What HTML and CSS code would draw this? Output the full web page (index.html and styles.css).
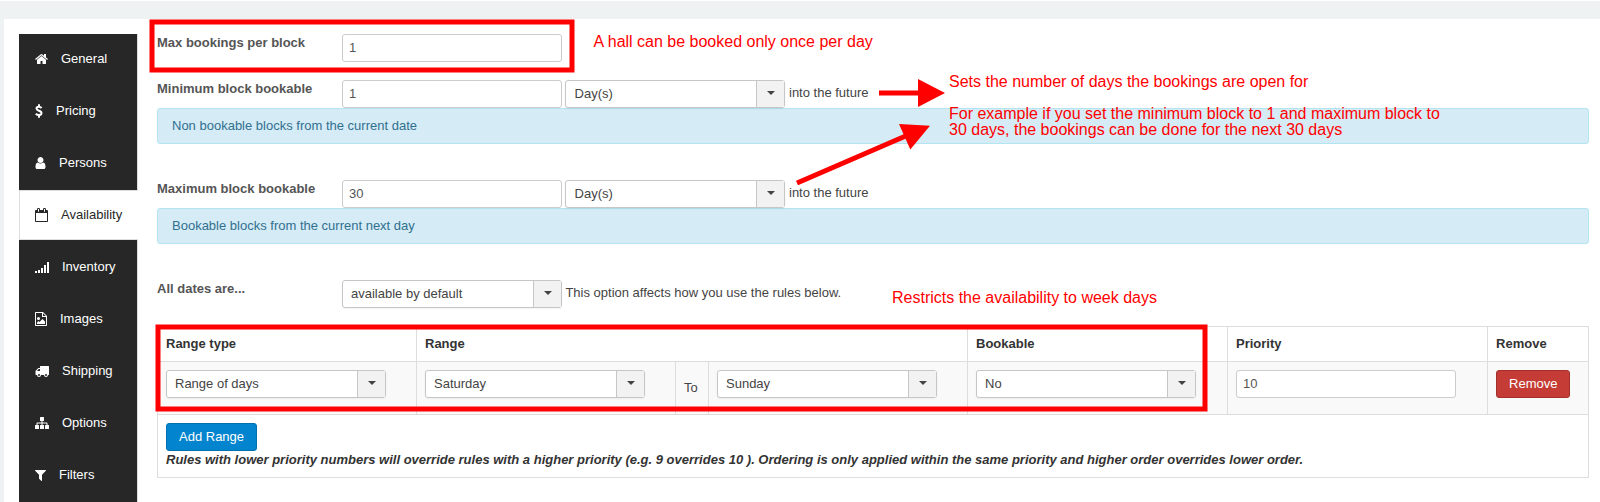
FILE: index.html
```html
<!DOCTYPE html>
<html lang="en">
<head>
<meta charset="utf-8">
<title>Availability</title>
<link rel="stylesheet" href="styles.css">
</head>
<body>
<div class="panel">
  <nav class="tabs">
    <a class="tab"><svg width="13" height="14" viewBox="64 0 1664 1792"><path d="M1472 992v480q0 26-19 45t-45 19h-384v-384h-256v384h-384q-26 0-45-19t-19-45v-480q0-1 .5-3t.5-3l575-474 575 474q1 2 1 6zm223-69l-62 74q-8 9-21 11h-3q-13 0-21-7l-692-577-692 577q-12 8-24 7-13-2-21-11l-62-74q-8-10-7-23.5t11-21.5l719-599q32-26 76-26t76 26l244 204v-195q0-14 9-23t23-9h192q14 0 23 9t9 23v408l219 182q10 8 11 21.5t-7 23.5z"/></svg>General</a>
    <a class="tab"><svg width="8" height="14" viewBox="0 0 8 14"><path class="line" d="M6.600 4C5.800 3.100 4.900 2.800 3.900 2.800 2.500 2.800 1.500 3.500 1.500 4.600 1.500 7.300 6.500 6.100 6.500 9 6.500 10.200 5.400 11.100 3.900 11.100 2.700 11.100 1.700 10.700.8 9.800M4 .2v2.500M4 11.100v2.600"/></svg>Pricing</a>
    <a class="tab"><svg width="11" height="14" viewBox="192 0 1408 1792"><path d="M1536 1399q0 109-62.500 187t-150.500 78h-854q-88 0-150.500-78t-62.500-187q0-85 8.500-160.500t31.500-152 58.500-131 94-89 134.500-34.500q131 128 313 128t313-128q76 0 134.500 34.500t94 89 58.500 131 31.500 152 8.500 160.500zm-256-887q0 159-112.500 271.500t-271.500 112.500-271.500-112.500-112.500-271.500 112.500-271.500 271.500-112.500 271.500 112.500 112.500 271.500z"/></svg>Persons</a>
    <a class="tab active"><svg width="13" height="14" viewBox="64 0 1664 1792"><path d="M192 1664h1408v-1024h-1408v1024zm384-1216v-288q0-14-9-23t-23-9h-64q-14 0-23 9t-9 23v288q0 14 9 23t23 9h64q14 0 23-9t9-23zm768 0v-288q0-14-9-23t-23-9h-64q-14 0-23 9t-9 23v288q0 14 9 23t23 9h64q14 0 23-9t9-23zm384-64v1280q0 52-38 90t-90 38h-1408q-52 0-90-38t-38-90v-1280q0-52 38-90t90-38h128v-96q0-66 47-113t113-47h64q66 0 113 47t47 113v96h384v-96q0-66 47-113t113-47h64q66 0 113 47t47 113v96h128q52 0 90 38t38 90z"/></svg>Availability</a>
    <a class="tab"><svg width="14" height="14" viewBox="0 0 14 14"><path d="M0 11h2v2H0zM3 10h2v3H3zM6 8h2v5H6zM9 5h2v8H9zM12 2h2v11h-2z"/></svg>Inventory</a>
    <a class="tab"><svg width="12" height="14" viewBox="0 0 12 14"><path fill-rule="evenodd" d="M.8 0H8l4 4v9.200a.8.8 0 0 1-.8.800H.8a.8.800 0 0 1-.8-.8V.8A.8.8 0 0 1 .8 0zM1 1v12h10V5H7V1zM8 1.200V4h2.800zM3.500 5a1.500 1.500 0 1 1 0 3 1.500 1.500 0 0 1 0-3zM2 12v-1.500L3.500 9l1 1L7.500 7 10 9.500V12z"/></svg>Images</a>
    <a class="tab"><svg width="14" height="14" viewBox="0 0 14 14"><path fill-rule="evenodd" d="M5.500 2H13.500a.5.500 0 0 1 .5.500V10.500a.6.600 0 0 1-.6.500H13a2 2 0 0 1-4 0H6a2 2 0 0 1-4 0H1a.6.600 0 0 1-.5-.5V7L2.800 4.400A1.200 1.200 0 0 1 3.600 4H5V2.500a.5.500 0 0 1 .5-.5zM5 5H3.700L2 6.900V7H5zM4 10a1 1 0 1 0 0 2 1 1 0 0 0 0-2zM11 10a1 1 0 1 0 0 2 1 1 0 0 0 0-2z"/></svg>Shipping</a>
    <a class="tab"><svg width="14" height="14" viewBox="0 0 14 14"><path d="M5.600 1h2.800a.6.600 0 0 1 .6.600V4.400a.6.600 0 0 1-.6.600H7.500V6.500H11.500a1 1 0 0 1 1 1V9h.9a.6.600 0 0 1 .6.600v2.800a.6.600 0 0 1-.6.600h-2.800a.6.600 0 0 1-.6-.6V9.600a.6.600 0 0 1 .6-.6h.9V7.500h-4V9h.9a.6.600 0 0 1 .6.600v2.800a.6.600 0 0 1-.6.600H5.600a.6.600 0 0 1-.6-.6V9.600a.6.600 0 0 1 .6-.6h.9V7.500h-4V9h.9a.6.600 0 0 1 .6.600v2.800a.6.600 0 0 1-.6.600H.6a.6.600 0 0 1-.6-.6V9.600A.6.600 0 0 1 .6 9h.9V7.500a1 1 0 0 1 1-1h4V5h-.9a.6.600 0 0 1-.6-.6V1.600a.6.600 0 0 1 .6-.6z"/></svg>Options</a>
    <a class="tab"><svg width="11" height="14" viewBox="192 0 1408 1792"><path d="M1595 295q17 41-14 70l-493 493v742q0 42-39 59-13 5-25 5-27 0-45-19l-256-256q-19-19-19-45v-486l-493-493q-31-29-14-70 17-39 59-39h1280q42 0 59 39z"/></svg>Filters</a>
  </nav>

  <main class="content">
    <div class="field first">
      <label>Max bookings per block</label>
      <input class="input" type="text" value="1">
    </div>
    <div class="field">
      <label>Minimum block bookable</label>
      <input class="input" type="text" value="1">
      <div class="select"><span>Day(s)</span><i></i></div>
      <span class="hint">into the future</span>
    </div>
    <div class="alert">Non bookable blocks from the current date</div>
    <div class="field">
      <label>Maximum block bookable</label>
      <input class="input" type="text" value="30">
      <div class="select"><span>Day(s)</span><i></i></div>
      <span class="hint">into the future</span>
    </div>
    <div class="alert">Bookable blocks from the current next day</div>
    <div class="field last">
      <label>All dates are...</label>
      <div class="select"><span>available by default</span><i></i></div>
      <span class="hint">This option affects how you use the rules below.</span>
    </div>

    <table class="rules">
      <colgroup><col class="wide"><col class="wide"><col class="to"><col class="wide"><col class="wider"><col class="wider"><col></colgroup>
      <thead>
        <tr><th>Range type</th><th colspan="3">Range</th><th>Bookable</th><th>Priority</th><th>Remove</th></tr>
      </thead>
      <tbody>
        <tr>
          <td><div class="select"><span>Range of days</span><i></i></div></td>
          <td><div class="select"><span>Saturday</span><i></i></div></td>
          <td class="middle">To</td>
          <td><div class="select"><span>Sunday</span><i></i></div></td>
          <td><div class="select"><span>No</span><i></i></div></td>
          <td><input class="input" type="text" value="10"></td>
          <td><button class="btn danger">Remove</button></td>
        </tr>
      </tbody>
      <tfoot>
        <tr><td colspan="7"><button class="btn primary">Add Range</button><p class="note">Rules with lower priority numbers will override rules with a higher priority (e.g. 9 overrides 10 ). Ordering is only applied within the same priority and higher order overrides lower order.</p></td></tr>
      </tfoot>
    </table>
  </main>
</div>

<div class="annotations">
  <svg width="1600" height="502" viewBox="0 0 1600 502">
    <rect x="152" y="22" width="420" height="48"/>
    <rect x="158" y="327" width="1047" height="82"/>
    <path d="M879 93H920M797 183L908 135"/>
    <path class="head" d="M918 79L945 93L918 107zM899 124L930 125.700L910.300 149.500z"/>
  </svg>
  <p class="remark once">A hall can be booked only once per day</p>
  <p class="remark days">Sets the number of days the bookings are open for</p>
  <p class="remark example">For example if you set the minimum block to 1 and maximum block to<br>30 days, the bookings can be done for the next 30 days</p>
  <p class="remark week">Restricts the availability to week days</p>
</div>
</body>
</html>
```
FILE: styles.css
```css
* { box-sizing: border-box; }

body {
  margin: 0;
  height: 502px;
  overflow: hidden;
  padding: 18px 0 0 4px;
  border-top: 1px solid #fff;
  background: #eef2f3;
  color: #444;
  font: 13px/18px "Liberation Sans", Arial, sans-serif;
}

.panel {
  display: flex;
  height: 483px;
  padding: 15px 11px 0 15px;
  background: #fff;
}

.tabs {
  display: flex;
  flex-direction: column;
  flex: none;
  gap: 2px;
  width: 119px;
  background: linear-gradient(to right, #272727 118px, #ddd 118px);
}

.tab {
  display: flex;
  align-items: center;
  gap: 13px;
  height: 50px;
  padding-left: 16px;
  color: #fff;
}

.tab svg { flex: none; fill: currentColor; }
.tab .line { fill: none; stroke: currentColor; stroke-width: 2; }

.tab.active {
  padding-left: 15px;
  border: 1px solid #ddd;
  border-right: 0;
  background: #fff;
  color: #272727;
}

.content { flex: 1; margin-left: 19px; }

.field { display: flex; height: 28px; }
.field.first { margin-bottom: 18px; }
.field.last { margin-bottom: 18px; }

.field label {
  width: 185px;
  color: #555;
  font-weight: bold;
}

.input {
  width: 220px;
  height: 28px;
  padding: 0 6px 2px;
  border: 1px solid #ccc;
  border-radius: 3px;
  background: #fff;
  color: #555;
  font: inherit;
  display: block;
}

.select {
  display: flex;
  width: 220px;
  height: 28px;
  border: 1px solid #c6c6c6;
  border-radius: 3px;
  background: #fff;
  box-shadow: 0 1px 2px rgba(0, 0, 0, .05);
  line-height: 26px;
}

.select span { flex: 1; padding-left: 8px; }

.select i {
  display: flex;
  justify-content: center;
  width: 28px;
  border-left: 1px solid #c6c6c6;
  background: #f2f2f2;
}

.select i::after {
  content: "";
  align-self: flex-start;
  margin-top: 10px;
  border: 4px solid transparent;
  border-top-color: #444;
  border-bottom: 0;
}

.input + .select { margin-left: 3px; }
.input + .select span { padding-left: 8.600px; }
.hint { margin-left: 4px; line-height: 25px; }
.last .hint { margin-left: 3.400px; }

.alert {
  height: 36px;
  margin-bottom: 36px;
  padding: 8px 14px;
  border: 1px solid #b2e5f0;
  border-radius: 3px;
  background: #d5ebf6;
  color: #31708f;
}

.rules {
  width: 1432px;
  table-layout: fixed;
  border-collapse: separate;
  border-spacing: 0;
  border: solid #ddd;
  border-width: 0 1px 1px 0;
}

.rules .wide { width: 259px; }
.rules .to { width: 33px; }
.rules .wider { width: 260px; }

.rules th,
.rules td {
  padding: 8px 0 0 8px;
  border: solid #ddd;
  border-width: 1px 0 0 1px;
  text-align: left;
  vertical-align: top;
}

.rules th { height: 35px; color: #333; }
.rules tbody td { height: 53px; background: #f9f9f9; }
.rules tbody .middle { padding: 0 0 0 8px; vertical-align: middle; }
.rules tfoot td { height: 63px; }

.btn {
  display: block;
  height: 28px;
  padding: 0 12px;
  border: 1px solid;
  border-radius: 3px;
  color: #fff;
  font: inherit;
}

.btn.primary { background: #0384ce; border-color: #0070b0; }
.btn.danger { background: #c43c35; border-color: #a3302b; }

.note {
  margin: 0;
  color: #333;
  font-weight: bold;
  font-style: italic;
}

/* Call-outs drawn over the form */
.annotations {
  position: absolute;
  inset: 0;
  overflow: hidden;
  pointer-events: none;
}

.annotations svg {
  display: block;
  fill: none;
  stroke: #f00;
  stroke-width: 5;
}

.annotations .head { fill: #f00; stroke: none; }

.remark {
  position: absolute;
  margin: 0;
  color: #f00;
  font-size: 16px;
  line-height: 16px;
  white-space: nowrap;
}

.once { left: 593.500px; top: 34px; }
.days { left: 949px; top: 74px; }
.example { left: 949px; top: 106px; }
.week { left: 892px; top: 290px; }
```
